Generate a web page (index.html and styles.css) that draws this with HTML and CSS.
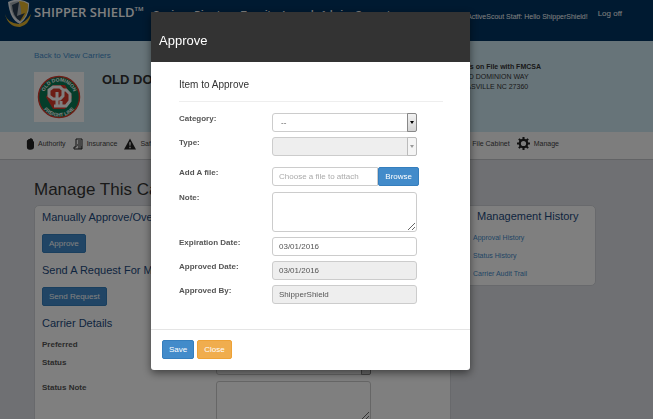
FILE: index.html
```
<!DOCTYPE html>
<html lang="en">
<head>
    <meta charset="utf-8">
    <title>Shipper Shield - Manage Carrier</title>
    <link rel="stylesheet" href="styles.css">
</head>
<body>
    <header class="topbar">
        <a href="#" class="brand">
            <svg class="brand-logo" viewBox="0 0 28 28">
                <path d="M4 2 Q14 -3 25 3 Q26 16 16 24 Q6 20 4 2Z" fill="#e9edf0"/>
                <path d="M6 3 Q14 -1 23 4 Q23 14 16 21 Q7 17 6 3Z" fill="#a8b0b6"/>
                <path d="M15 1 Q20 1 24 4 Q25 15 16 22 Q19 12 15 1Z" fill="#e4b52c"/>
                <path d="M8 5 L15 2 L13 16 L21 13 L16 21 Q9 17 8 5Z" fill="#2a3d51"/>
                <path d="M1 14 Q3 23 15 24 Q22 22 27 14 Q25 25 16 27 Q4 27 1 14Z" fill="#e4b52c"/>
            </svg>
            <span class="brand-name">SHIPPER SHIELD<sup>TM</sup></span>
        </a>
        <nav class="main-nav">
            <a href="#">Carriers</a>
            <a href="#">Directory</a>
            <a href="#">Transits</a>
            <a href="#">Leased</a>
            <a href="#">Admin</a>
            <a href="#">Support</a>
        </nav>
        <span class="hello">ActiveScout Staff: Hello ShipperShield!</span>
        <a href="#" class="logoff">Log off</a>
    </header>

    <section class="carrier">
        <div class="carrier-main">
            <a href="#" class="back">Back to View Carriers</a>
            <div class="carrier-id">
                <svg class="carrier-logo" viewBox="0 0 50 50">
                    <rect width="50" height="50" fill="#fff"/>
                    <circle cx="25" cy="25" r="20.500" fill="#0b7a55" stroke="#d93a2b" stroke-width="1.500"/>
                    <path d="M19 13 H31 L38 25 L31 37 H19 L12 25Z" fill="#d93a2b"/>
                    <defs>
                        <path id="arc-top" d="M9.500 25 A15.500 15.500 0 0 1 40.500 25"/>
                        <path id="arc-bottom" d="M5.500 25 A19.500 19.500 0 0 0 44.500 25"/>
                    </defs>
                    <text class="seal-text"><textPath href="#arc-top" startOffset="50%">OLD DOMINION</textPath></text>
                    <text class="seal-text"><textPath href="#arc-bottom" startOffset="50%">FREIGHT LINE</textPath></text>
                    <path d="M19 15 H26 L29 18 V24 L26 27 H19 L15 24 V18Z" fill="none" stroke="#fff" stroke-width="3"/>
                    <path d="M29 18 H32 L36 22 V29 L32 34 H20 M23 20 V34 M27 29 V34" fill="none" stroke="#fff" stroke-width="3"/>
                </svg>
                <h1>OLD DOMINION</h1>
            </div>
        </div>
        <address class="carrier-address">
            <strong>Address on File with FMCSA</strong><br>
            500 OLD DOMINION WAY<br>
            THOMASVILLE NC 27360
        </address>
    </section>

    <nav class="sub-nav">
        <a href="#">
            <svg class="icon-hand" viewBox="0 0 9 13"><path d="M1 3 Q1 2 2 2 L3 1 H4 L5 0 H6 L7 1 Q8 1 8 3 L9 4 V10 Q9 13 5 13 H4 Q1 13 1 10Z"/></svg>
            Authority
        </a>
        <a href="#">
            <svg class="icon-doc" viewBox="0 0 10 12"><path d="M3 9 V1 H9 V11 H1 V9 H3 M5 3 H8 M5 5 H8 M4 7 H8 M6 8 V11 M8 8 V11" fill="none" stroke="#222"/></svg>
            Insurance
        </a>
        <a href="#">
            <svg class="icon-warn" viewBox="0 0 13 12"><path fill-rule="evenodd" d="M6.500 0 L13 12 H0Z M5.700 4 H7.300 L7 8 H6Z M5.800 9 H7.200 V10.500 H5.800Z"/></svg>
            Safety
        </a>
        <a href="#" class="push">
            <svg class="icon-file" viewBox="0 0 10 12"><path fill-rule="evenodd" d="M0 0 H10 V12 H0Z M2 2 H8 V5 H2Z M2 7 H8 V10 H2Z"/></svg>
            File Cabinet
        </a>
        <a href="#">
            <svg class="icon-gear" viewBox="0 0 14 14">
                <circle cx="7" cy="7" r="4" fill="none" stroke="#222" stroke-width="2.400"/>
                <path d="M7 0 V2.500 M7 11.500 V14 M0 7 H2.500 M11.500 7 H14 M2 2 L3.800 3.800 M10.200 10.200 L12 12 M12 2 L10.200 3.800 M2 12 L3.800 10.200" stroke="#222" stroke-width="2.200"/>
            </svg>
            Manage
        </a>
    </nav>

    <main class="page">
        <h2 class="page-title">Manage This Carrier</h2>
        <div class="columns">
            <section class="panel details">
                <h3>Manually Approve/Override</h3>
                <button type="button" class="btn btn-primary">Approve</button>
                <h3>Send A Request For Monitoring</h3>
                <button type="button" class="btn btn-primary">Send Request</button>
                <h3>Carrier Details</h3>
                <div class="detail-row preferred-row">
                    <label for="preferred">Preferred</label>
                    <input type="checkbox" id="preferred">
                </div>
                <div class="detail-row">
                    <label for="status">Status</label>
                    <div class="select-wrap"><select id="status" class="control"><option></option></select></div>
                </div>
                <div class="detail-row">
                    <label for="status-note">Status Note</label>
                    <textarea id="status-note" class="control"></textarea>
                </div>
            </section>
            <aside class="panel history">
                <h3>Management History</h3>
                <a href="#">Approval History</a>
                <a href="#">Status History</a>
                <a href="#">Carrier Audit Trail</a>
            </aside>
        </div>
    </main>

    <div class="backdrop">
        <form class="modal" role="dialog" aria-labelledby="modal-title">
            <div class="modal-header"><h2 id="modal-title">Approve</h2></div>
            <div class="modal-body">
                <h3>Item to Approve</h3>
                <div class="row">
                    <label for="category">Category:</label>
                    <div class="select-wrap"><select id="category" class="control"><option>--</option></select></div>
                </div>
                <div class="row row-type">
                    <label for="type">Type:</label>
                    <div class="select-wrap disabled"><select id="type" class="control" disabled><option></option></select></div>
                </div>
                <div class="row row-file">
                    <label for="file">Add A file:</label>
                    <div class="file-group">
                        <input type="text" id="file" class="control" placeholder="Choose a file to attach">
                        <button type="button" class="btn btn-primary">Browse</button>
                    </div>
                </div>
                <div class="row">
                    <label for="note">Note:</label>
                    <textarea id="note" class="control"></textarea>
                </div>
                <div class="row">
                    <label for="expiration">Expiration Date:</label>
                    <input type="text" id="expiration" class="control" value="03/01/2016">
                </div>
                <div class="row">
                    <label for="approved-date">Approved Date:</label>
                    <input type="text" id="approved-date" class="control" value="03/01/2016" readonly>
                </div>
                <div class="row">
                    <label for="approved-by">Approved By:</label>
                    <input type="text" id="approved-by" class="control" value="ShipperShield" readonly>
                </div>
            </div>
            <div class="modal-footer">
                <button type="button" class="btn btn-primary">Save</button>
                <button type="button" class="btn btn-warning">Close</button>
            </div>
        </form>
    </div>
</body>
</html>
```

FILE: styles.css
```
*, *::before, *::after {
    box-sizing: border-box;
}
body {
    margin: 0;
    height: 100vh;
    overflow: hidden;
    background: #dfe1e6;
    color: #333;
    font-family: "Liberation Sans", Arial, sans-serif;
    font-size: 8px;
    line-height: 12px;
}
h1, h2, h3 {
    margin: 0;
    font-weight: normal;
}
a {
    color: #428bca;
    text-decoration: none;
}

/* top bar */
.topbar {
    display: flex;
    align-items: flex-start;
    height: 41px;
    padding: 0 31px 0 4px;
    background: #003462;
}
.topbar a, .hello {
    color: #fff;
    white-space: nowrap;
}
.brand {
    display: flex;
    width: 149px;
}
.brand-logo {
    width: 28px;
    height: 28px;
    margin-right: 2px;
}
.brand-name {
    font-family: "Open Sans", sans-serif;
    font-size: 13px;
    font-weight: 600;
    line-height: 24px;
}
.brand-name sup {
    font-size: 6px;
    line-height: 0;
    vertical-align: 6px;
}
.main-nav {
    display: flex;
    gap: 7px;
    padding-top: 8px;
    font-size: 9px;
    font-weight: bold;
}
.hello {
    margin-left: auto;
    padding-top: 11px;
    font-size: 7px;
}
.logoff {
    margin-left: 10px;
    padding-top: 8px;
}

/* carrier summary */
.carrier {
    display: flex;
    justify-content: space-between;
    height: 91px;
    padding: 9px 112px 0 34px;
    background: #cfe9f3;
}
.carrier-id {
    display: flex;
    gap: 18px;
    margin-top: 10px;
}
.carrier-logo {
    width: 50px;
    height: 50px;
}
.seal-text {
    fill: #fff;
    font-size: 5px;
    font-weight: bold;
    text-anchor: middle;
}
.carrier h1 {
    font-size: 13px;
    font-weight: bold;
    line-height: 15px;
}
.carrier-address {
    padding-top: 12px;
    font-size: 7px;
    font-style: normal;
    line-height: 10px;
}

/* sub navigation */
.sub-nav {
    display: flex;
    align-items: center;
    gap: 7px;
    height: 28px;
    padding: 0 94px 4px 26px;
    background: #fafafa;
    border-bottom: 1px solid #c4c6ca;
    font-size: 7px;
}
.sub-nav a {
    display: flex;
    align-items: center;
    gap: 4px;
    color: #444;
}
.sub-nav svg {
    fill: #222;
}
.sub-nav .push {
    margin-left: auto;
}
.icon-hand {
    width: 8px;
    height: 12px;
}
.icon-doc, .icon-file {
    width: 10px;
    height: 12px;
}
.icon-warn {
    width: 12px;
    height: 12px;
}
.icon-gear {
    width: 13px;
    height: 13px;
}

/* page content */
.page {
    padding: 20px 57px 0 34px;
}
.page-title {
    font-size: 17px;
    line-height: 20px;
}
.columns {
    display: grid;
    grid-template-columns: 417fr 131fr;
    gap: 14px;
    align-items: start;
    margin-top: 5px;
}
.panel {
    padding: 3px 7px 5px;
    background: #fff;
    border: 1px solid #d0d3d8;
    border-radius: 5px;
}
.panel h3 {
    color: #1c4a80;
    font-size: 11px;
    line-height: 14px;
}
.details {
    padding-top: 4px;
}
.details .btn {
    display: block;
    margin: 10px 0;
}
.detail-row {
    display: grid;
    grid-template-columns: 174px 155px;
    margin-bottom: 6px;
}
.detail-row label {
    padding-top: 1px;
    color: #555;
    font-weight: bold;
}
.detail-row input {
    width: 8px;
    height: 8px;
    margin: 4px 0 0;
}
.preferred-row {
    margin: 8px 0 5px;
}
.detail-row textarea {
    height: 60px;
}
.history h3 {
    margin-bottom: 9px;
    padding-left: 4px;
}
.history a {
    display: block;
    font-size: 7px;
}
.history a + a {
    margin-top: 6px;
}

/* controls */
.control {
    display: block;
    width: 100%;
    height: 19px;
    margin: 0;
    padding: 2px 6px;
    color: #555;
    background: #fff;
    border: 1px solid #ccc;
    border-radius: 3px;
    font: inherit;
}
.control::placeholder {
    color: #aaa;
}
.control[readonly], .control:disabled {
    background: #eee;
}
select.control {
    appearance: none;
    padding-left: 8px;
    opacity: 1;
}
textarea.control {
    height: 40px;
}
.select-wrap {
    position: relative;
}
.select-wrap::before {
    content: "";
    position: absolute;
    top: 0;
    right: 0;
    width: 10px;
    height: 19px;
    border: 1px solid #888;
    border-radius: 0 2px 2px 0;
    background: linear-gradient(#f2f2f2, #d4d4d4);
    pointer-events: none;
}
.select-wrap::after {
    content: "";
    position: absolute;
    top: 8px;
    right: 3px;
    border: 2px solid transparent;
    border-top: 3px solid #000;
    border-bottom: 0;
    pointer-events: none;
}
.select-wrap.disabled::before {
    border-color: #bbb;
    background: #f4f4f4;
}
.select-wrap.disabled::after {
    border-top-color: #999;
}
.btn {
    height: 19px;
    padding: 0 6px;
    color: #fff;
    border: 1px solid;
    border-radius: 2px;
    font: inherit;
}
.btn-primary {
    background: #428bca;
    border-color: #357ebd;
}
.btn-warning {
    background: #f0ad4e;
    border-color: #eea236;
}

/* modal */
.backdrop {
    position: fixed;
    inset: 0;
    padding: 12px 32px 0 0;
    background: rgba(0, 0, 0, 0.5);
}
.modal {
    max-width: 319px;
    margin: 0 auto;
    background: #fff;
    border-radius: 3px;
    box-shadow: 0 3px 8px rgba(0, 0, 0, 0.5);
}
.modal-header {
    padding: 21px 8px 13px;
    color: #fff;
    background: #333;
}
.modal-header h2 {
    font-size: 13px;
    line-height: 16px;
}
.modal-body {
    padding: 16px 27px 20px 28px;
}
.modal-body h3 {
    margin-bottom: 11px;
    padding-bottom: 9px;
    border-bottom: 1px solid #eee;
    font-size: 10px;
    line-height: 14px;
}
.row {
    display: grid;
    grid-template-columns: 93px 145px;
    align-items: start;
    margin-bottom: 5px;
}
.row label {
    color: #555;
    font-weight: bold;
}
.row-type {
    margin-bottom: 11px;
}
.row-file {
    margin-bottom: 6px;
}
.file-group {
    display: flex;
    width: 147px;
}
.file-group .control {
    flex: 1;
    min-width: 0;
    border-radius: 3px 0 0 3px;
}
.modal-footer {
    display: flex;
    gap: 3px;
    padding: 10px 11px 11px;
    border-top: 1px solid #e5e5e5;
}
```
